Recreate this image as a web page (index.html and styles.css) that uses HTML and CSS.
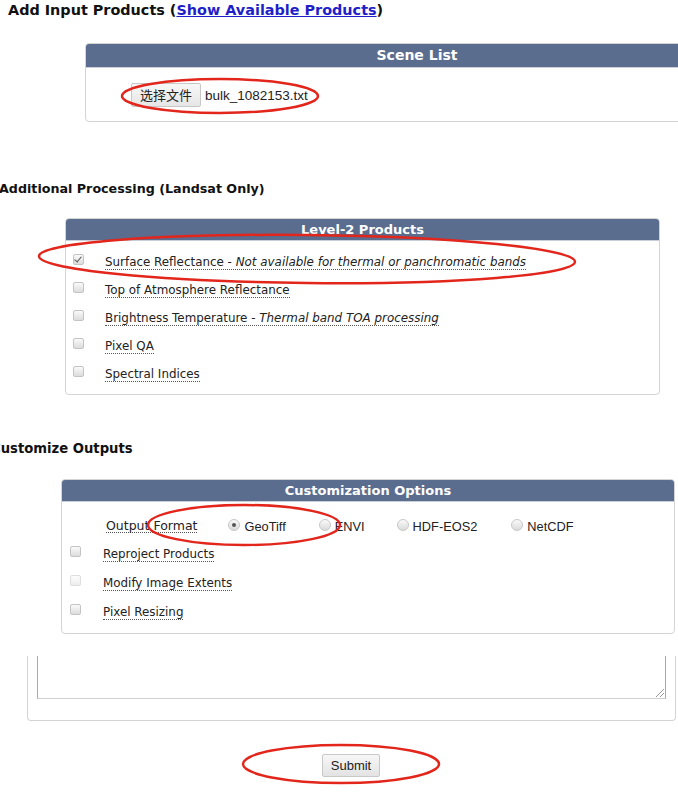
FILE: index.html
```html
<!DOCTYPE html>
<html>
<head>
<meta charset="utf-8">
<link rel="stylesheet" href="styles.css">
</head>
<body>
<div class="page">
  <h1 class="title">Add Input Products (<a href="#" class="link">Show Available Products</a>)</h1>

  <div class="panel scene">
    <div class="panel-head">Scene List</div>
    <div class="panel-body scene-body">
      <span class="file-btn">选择文件</span><span class="file-name">bulk_1082153.txt</span>
    </div>
  </div>

  <h2 class="section sec-proc">Additional Processing (Landsat Only)</h2>

  <div class="panel level2">
    <div class="panel-head">Level-2 Products</div>
    <div class="panel-body l2-body">
      <div class="row"><span class="cb checked"></span><span class="lbl">Surface Reflectance - <i>Not available for thermal or panchromatic bands</i></span></div>
      <div class="row"><span class="cb"></span><span class="lbl">Top of Atmosphere Reflectance</span></div>
      <div class="row"><span class="cb"></span><span class="lbl">Brightness Temperature - <i>Thermal band TOA processing</i></span></div>
      <div class="row"><span class="cb"></span><span class="lbl">Pixel QA</span></div>
      <div class="row"><span class="cb"></span><span class="lbl">Spectral Indices</span></div>
    </div>
  </div>

  <h2 class="section sec-cust">Customize Outputs</h2>

  <div class="panel custom">
    <div class="panel-head">Customization Options</div>
    <div class="panel-body cust-body">
      <div class="row fmt-row">
        <span class="lbl fmt-lbl">Output Format</span>
        <span class="opt o1"><span class="rd checked"></span>GeoTiff</span>
        <span class="opt o2"><span class="rd"></span>ENVI</span>
        <span class="opt o3"><span class="rd"></span>HDF-EOS2</span>
        <span class="opt o4"><span class="rd"></span>NetCDF</span>
      </div>
      <div class="row crow"><span class="cb"></span><span class="lbl">Reproject Products</span></div>
      <div class="row crow"><span class="cb faint"></span><span class="lbl">Modify Image Extents</span></div>
      <div class="row crow"><span class="cb"></span><span class="lbl">Pixel Resizing</span></div>
    </div>
  </div>

  <div class="notes">
    <div class="textarea"><span class="grip"></span></div>
  </div>

  <div class="submit-wrap"><span class="submit">Submit</span></div>

  <svg class="marks" width="678" height="792" viewBox="0 0 678 792">
    <ellipse cx="220" cy="96" rx="98" ry="17" />
    <ellipse cx="307" cy="259" rx="268" ry="24" transform="rotate(0.6 307 259)" />
    <ellipse cx="244" cy="525" rx="96" ry="20" />
    <ellipse cx="341" cy="764" rx="98" ry="19" />
  </svg>
</div>
</body>
</html>
```

FILE: styles.css
```css
html, body {
  margin: 0;
  padding: 0;
  background: #fff;
  overflow: hidden;
}
body {
  width: 678px;
  height: 792px;
  font-family: "DejaVu Sans", Verdana, sans-serif;
  color: #222;
}
.page {
  position: relative;
  width: 678px;
  height: 792px;
  overflow: hidden;
}
.title {
  margin: 0;
  padding-left: 8px;
  font-size: 14.4px;
  line-height: 20px;
  font-weight: bold;
  color: #111;
  white-space: nowrap;
}
.link {
  color: #1f1fc8;
  text-decoration: underline;
}
.panel {
  border: 1px solid #d4d4d4;
  border-radius: 4px;
  background: #fff;
  box-sizing: border-box;
}
.panel-head {
  background: #5a6d8f;
  color: #fff;
  font-weight: bold;
  text-align: center;
  border-radius: 3px 3px 0 0;
  border-bottom: 1px solid #c9ced8;
  box-sizing: border-box;
}
.scene {
  margin-left: 85px;
  margin-top: 23px;
  width: 664px;
  height: 79px;
}
.scene .panel-head {
  height: 24px;
  line-height: 23px;
  font-size: 14px;
}
.scene-body {
  padding: 15px 0 0 45px;
  display: flex;
  align-items: center;
}
.file-btn {
  display: inline-block;
  width: 70px;
  height: 24px;
  line-height: 22px;
  box-sizing: border-box;
  border: 1px solid #c8c8c8;
  border-radius: 2px;
  background: linear-gradient(#f7f7f7, #e6e6e6);
  text-align: center;
  font-family: "Noto Sans CJK SC", sans-serif;
  font-size: 13px;
  color: #222;
}
.file-name {
  margin-left: 4px;
  font-family: "Liberation Sans", Arial, sans-serif;
  font-size: 13.5px;
  color: #222;
}
.section {
  margin: 0;
  font-size: 12.7px;
  line-height: 18px;
  font-weight: bold;
  color: #111;
  white-space: nowrap;
}
.sec-proc {
  margin-top: 58px;
  margin-left: -1px;
}
.sec-cust {
  margin-top: 45px;
  margin-left: -9px;
  font-size: 13.2px;
}
.level2 {
  margin-left: 65px;
  margin-top: 20px;
  width: 595px;
  height: 177px;
}
.level2 .panel-head,
.custom .panel-head {
  height: 22px;
  line-height: 21px;
  font-size: 13px;
}
.l2-body {
  padding-top: 8px;
  padding-left: 7px;
}
.row {
  height: 28px;
  display: flex;
  align-items: center;
  font-size: 11.9px;
  white-space: nowrap;
}
.lbl {
  border-bottom: 1px dotted #555;
  line-height: 13px;
  color: #222;
}
.cb {
  width: 9px;
  height: 9px;
  border: 1px solid #c4c4c4;
  border-radius: 2px;
  background: linear-gradient(#fafafa, #dcdcdc);
  position: relative;
  margin-top: -7px;
  flex: none;
}
.cb.faint {
  border-color: #dedede;
  background: linear-gradient(#fcfcfc, #eee);
}
.cb.checked::after {
  content: "";
  position: absolute;
  left: 2px;
  top: 0px;
  width: 3px;
  height: 6px;
  border: solid #555;
  border-width: 0 1.5px 1.5px 0;
  transform: rotate(40deg);
}
.l2-body .lbl {
  margin-left: 21px;
}
.custom {
  margin-left: 61px;
  margin-top: 21px;
  width: 614px;
  height: 155px;
}
.cust-body {
  padding-top: 10px;
  padding-left: 8px;
}
.fmt-row {
  font-size: 12.5px;
}
.fmt-lbl {
  margin-left: 36px;
}
.opt {
  display: flex;
  align-items: center;
  color: #222;
  font-family: "Liberation Sans", Arial, sans-serif;
  font-size: 12.8px;
}
.o1 { margin-left: 31px; }
.o2 { margin-left: 33px; }
.o3 { margin-left: 32px; }
.o4 { margin-left: 34px; }
.rd {
  width: 10px;
  height: 10px;
  border: 1px solid #c8c8c8;
  border-radius: 50%;
  background: linear-gradient(#fafafa, #dadada);
  margin-right: 4px;
  margin-top: -2px;
  position: relative;
  flex: none;
}
.rd.checked::after {
  content: "";
  position: absolute;
  left: 3px;
  top: 3px;
  width: 4px;
  height: 4px;
  border-radius: 50%;
  background: #555;
}
.crow {
  height: 29px;
}
.crow .lbl {
  margin-left: 22px;
}
.notes {
  margin-left: 27px;
  margin-top: 22px;
  width: 649px;
  height: 65px;
  border: 1px solid #d4d4d4;
  border-top: none;
  border-radius: 0 0 4px 4px;
  box-sizing: border-box;
  padding: 0 9px;
}
.textarea {
  position: relative;
  height: 43px;
  border: 1px solid #a9a9a9;
  border-top: none;
  border-bottom-color: #d0d0d0;
  box-sizing: border-box;
}
.grip {
  position: absolute;
  right: 1px;
  bottom: 1px;
  width: 8px;
  height: 8px;
  background: linear-gradient(135deg, transparent 45%, #999 45%, #999 52%, transparent 52%, transparent 70%, #999 70%, #999 77%, transparent 77%);
}
.submit-wrap {
  margin-top: 33px;
  padding-left: 322px;
}
.submit {
  display: inline-block;
  width: 58px;
  height: 23px;
  line-height: 21px;
  box-sizing: border-box;
  border: 1px solid #c8c8c8;
  border-radius: 2px;
  background: linear-gradient(#f7f7f7, #e3e3e3);
  text-align: center;
  font-family: "Liberation Sans", Arial, sans-serif;
  font-size: 13px;
  color: #222;
}
.marks {
  position: absolute;
  left: 0;
  top: 0;
  pointer-events: none;
}
.marks ellipse {
  fill: none;
  stroke: #e2261c;
  stroke-width: 2.5;
}
```
